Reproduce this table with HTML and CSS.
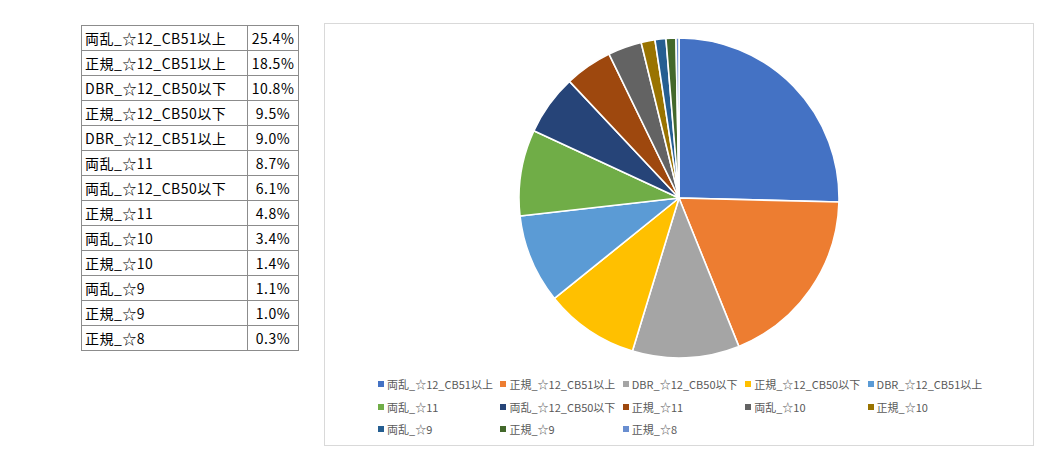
FILE: index.html
```html
<!DOCTYPE html>
<html lang="ja">
<head>
<meta charset="utf-8">
<title>Pie</title>
<link rel="stylesheet" href="styles.css">
</head>
<body>
<div class="page">
  <table class="data">
    <tr><td class="name">両乱_☆12_CB51以上</td><td class="pct">25.4%</td></tr>
    <tr><td class="name">正規_☆12_CB51以上</td><td class="pct">18.5%</td></tr>
    <tr><td class="name">DBR_☆12_CB50以下</td><td class="pct">10.8%</td></tr>
    <tr><td class="name">正規_☆12_CB50以下</td><td class="pct">9.5%</td></tr>
    <tr><td class="name">DBR_☆12_CB51以上</td><td class="pct">9.0%</td></tr>
    <tr><td class="name">両乱_☆11</td><td class="pct">8.7%</td></tr>
    <tr><td class="name">両乱_☆12_CB50以下</td><td class="pct">6.1%</td></tr>
    <tr><td class="name">正規_☆11</td><td class="pct">4.8%</td></tr>
    <tr><td class="name">両乱_☆10</td><td class="pct">3.4%</td></tr>
    <tr><td class="name">正規_☆10</td><td class="pct">1.4%</td></tr>
    <tr><td class="name">両乱_☆9</td><td class="pct">1.1%</td></tr>
    <tr><td class="name">正規_☆9</td><td class="pct">1.0%</td></tr>
    <tr><td class="name">正規_☆8</td><td class="pct">0.3%</td></tr>
  </table>

  <div class="chart">
    <svg class="pie" width="322" height="322" viewBox="-161 -161 322 322">
      <g stroke="#ffffff" stroke-width="1.6" stroke-linejoin="round">
        <path fill="#4472C4" d="M0 0 L0 -160 A160 160 0 0 1 159.95 4.02 Z"/>
        <path fill="#ED7D31" d="M0 0 L159.95 4.02 A160 160 0 0 1 59.83 148.39 Z"/>
        <path fill="#A5A5A5" d="M0 0 L59.83 148.39 A160 160 0 0 1 -46.56 153.07 Z"/>
        <path fill="#FFC000" d="M0 0 L-46.56 153.07 A160 160 0 0 1 -124.55 100.43 Z"/>
        <path fill="#5B9BD5" d="M0 0 L-124.55 100.43 A160 160 0 0 1 -158.98 18.06 Z"/>
        <path fill="#70AD47" d="M0 0 L-158.98 18.06 A160 160 0 0 1 -145.20 -67.20 Z"/>
        <path fill="#264478" d="M0 0 L-145.20 -67.20 A160 160 0 0 1 -109.53 -116.64 Z"/>
        <path fill="#9E480E" d="M0 0 L-109.53 -116.64 A160 160 0 0 1 -69.94 -143.90 Z"/>
        <path fill="#636363" d="M0 0 L-69.94 -143.90 A160 160 0 0 1 -37.84 -155.46 Z"/>
        <path fill="#997300" d="M0 0 L-37.84 -155.46 A160 160 0 0 1 -24.04 -158.18 Z"/>
        <path fill="#255E91" d="M0 0 L-24.04 -158.18 A160 160 0 0 1 -13.05 -159.47 Z"/>
        <path fill="#43682B" d="M0 0 L-13.05 -159.47 A160 160 0 0 1 -3.02 -159.97 Z"/>
        <path fill="#698ED0" d="M0 0 L-3.02 -159.97 A160 160 0 0 1 0 -160 Z"/>
      </g>
    </svg>

    <ul class="legend">
      <li><span class="mk c1"></span>両乱_☆12_CB51以上</li>
      <li><span class="mk c2"></span>正規_☆12_CB51以上</li>
      <li><span class="mk c3"></span>DBR_☆12_CB50以下</li>
      <li><span class="mk c4"></span>正規_☆12_CB50以下</li>
      <li><span class="mk c5"></span>DBR_☆12_CB51以上</li>
      <li><span class="mk c6"></span>両乱_☆11</li>
      <li><span class="mk c7"></span>両乱_☆12_CB50以下</li>
      <li><span class="mk c8"></span>正規_☆11</li>
      <li><span class="mk c9"></span>両乱_☆10</li>
      <li><span class="mk c10"></span>正規_☆10</li>
      <li><span class="mk c11"></span>両乱_☆9</li>
      <li><span class="mk c12"></span>正規_☆9</li>
      <li><span class="mk c13"></span>正規_☆8</li>
    </ul>
  </div>
</div>
</body>
</html>
```

FILE: styles.css
```css
* { box-sizing: border-box; }

html, body {
  margin: 0;
  padding: 0;
  background: #ffffff;
}

body {
  font-family: "Noto Sans CJK JP", "Noto Sans", sans-serif;
  color: #000000;
}

.page {
  display: flex;
  align-items: flex-start;
  padding: 23px 0 0 81px;
  gap: 25px;
}

.data {
  margin-top: 2px;
  border-collapse: collapse;
  font-size: 14px;
  letter-spacing: 0.5px;
}

.data td {
  border: 1px solid #8c8c8c;
  height: 25px;
  padding: 0 3px;
  line-height: 1;
  white-space: nowrap;
}

.data .name {
  width: 166px;
  text-align: left;
}

.data .pct {
  width: 51px;
  text-align: center;
  padding: 0;
}

.chart {
  width: 710px;
  height: 423px;
  border: 1px solid #d9d9d9;
  display: flex;
  flex-direction: column;
  align-items: center;
  padding-top: 13px;
}

.pie {
  display: block;
}

.legend {
  list-style: none;
  margin: 14px 0 0 0;
  padding: 0 0 0 53px;
  align-self: stretch;
  display: grid;
  grid-template-columns: repeat(5, 122.4px);
  grid-auto-rows: 22.5px;
  font-size: 11px;
  color: #595959;
}

.legend li {
  display: flex;
  align-items: center;
  white-space: nowrap;
}

.mk {
  display: inline-block;
  width: 6px;
  height: 6px;
  margin-right: 3px;
  flex: none;
}

.c1 { background: #4472C4; }
.c2 { background: #ED7D31; }
.c3 { background: #A5A5A5; }
.c4 { background: #FFC000; }
.c5 { background: #5B9BD5; }
.c6 { background: #70AD47; }
.c7 { background: #264478; }
.c8 { background: #9E480E; }
.c9 { background: #636363; }
.c10 { background: #997300; }
.c11 { background: #255E91; }
.c12 { background: #43682B; }
.c13 { background: #698ED0; }
```
